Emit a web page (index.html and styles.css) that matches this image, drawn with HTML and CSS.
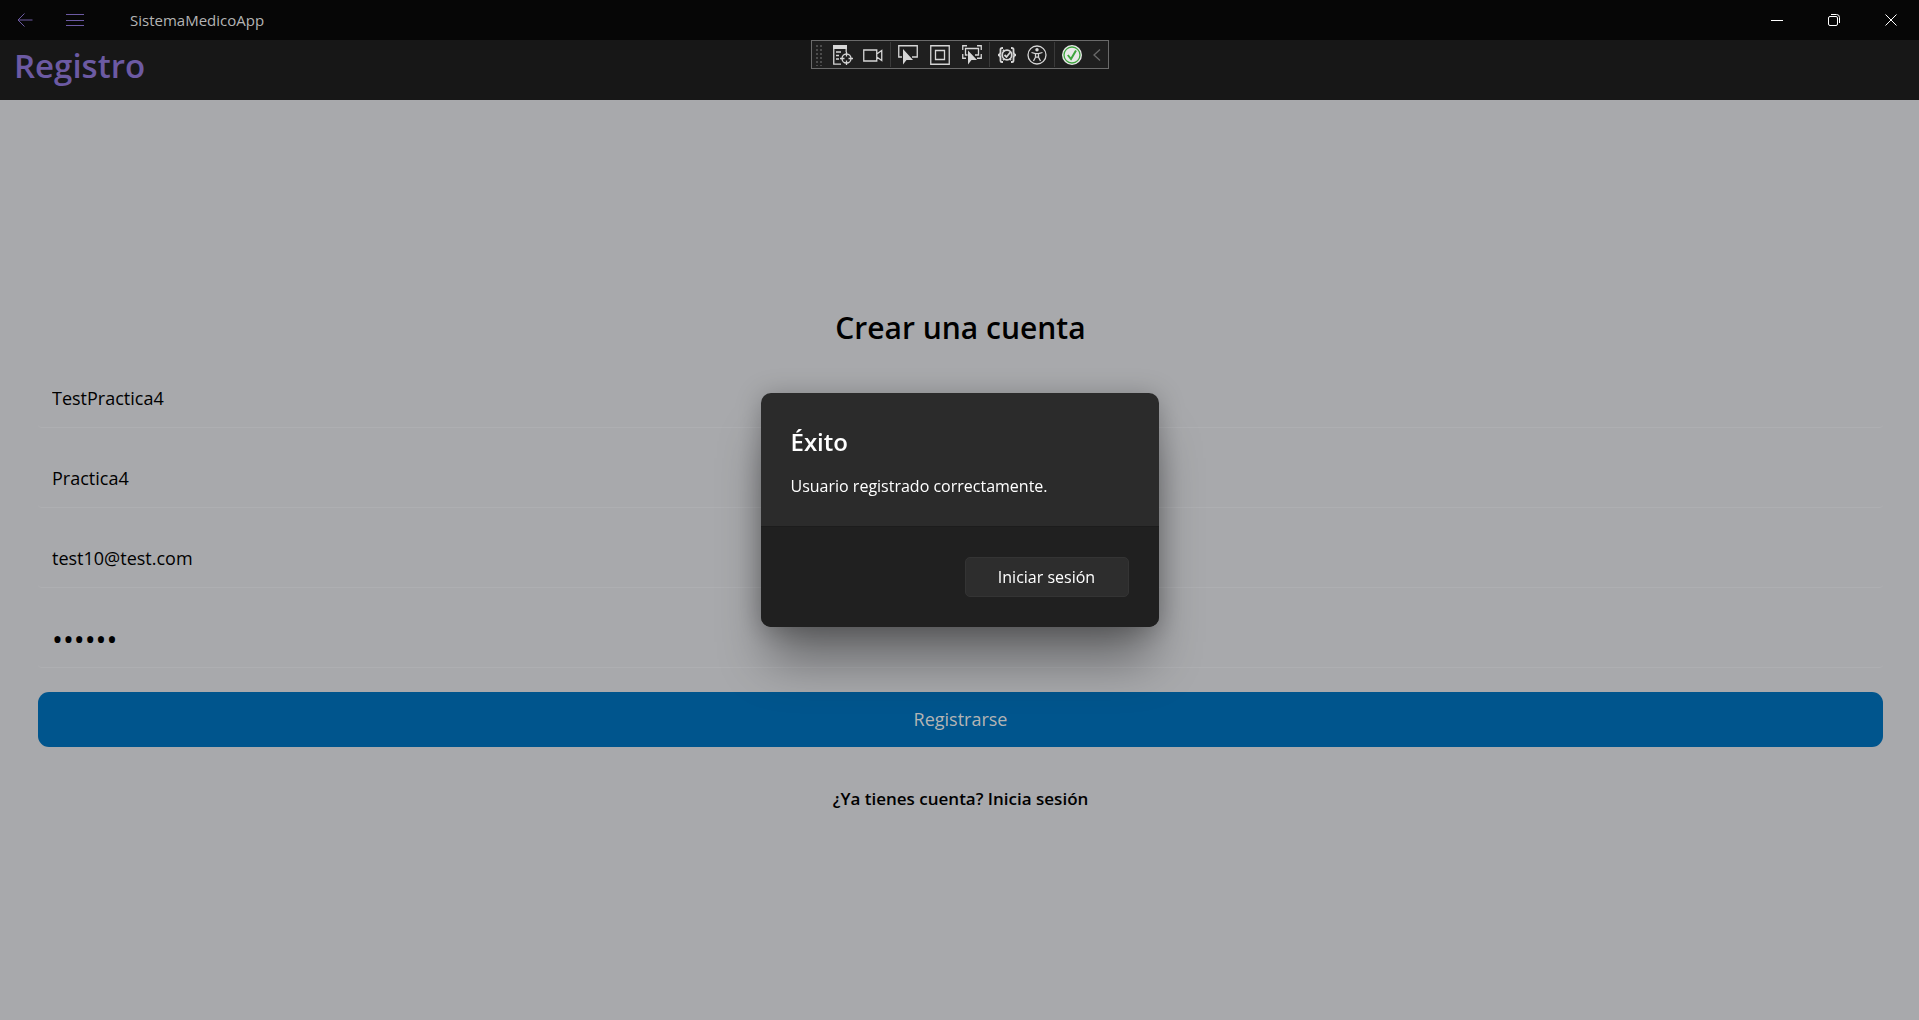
FILE: index.html
```html
<!DOCTYPE html>
<html lang="es">
<head>
<meta charset="utf-8">
<meta name="viewport" content="width=device-width, initial-scale=1">
<title>SistemaMedicoApp</title>
<link rel="stylesheet" href="styles.css">
</head>
<body>
<div class="app">
  <header class="titlebar">
    <button class="nav-button" type="button" aria-label="Atrás">
      <svg width="16" height="14" viewBox="0 0 16 14"><path d="M7.500 .5 1 7l6.500 6.500M1 7h14.500"/></svg>
    </button>
    <button class="nav-button" type="button" aria-label="Menú">
      <svg width="20" height="14" viewBox="0 0 20 14"><path d="M1 1.500h18M1 7.500h18M1 12.500h18"/></svg>
    </button>
    <span class="app-name">SistemaMedicoApp</span>
    <div class="window-controls">
      <button class="window-button" type="button" aria-label="Minimizar">
        <svg width="14" height="14" viewBox="0 0 14 14"><path d="M1 7.500h12"/></svg>
      </button>
      <button class="window-button" type="button" aria-label="Restaurar">
        <svg width="14" height="14" viewBox="0 0 14 14"><rect x="1.500" y="3.500" width="9" height="9" rx="1.500"/><path d="M4 1.500h5.500a3 3 0 0 1 3 3V10"/></svg>
      </button>
      <button class="window-button" type="button" aria-label="Cerrar">
        <svg width="14" height="14" viewBox="0 0 14 14"><path d="m1.500 1.500 11 11m0-11-11 11"/></svg>
      </button>
    </div>
  </header>

  <div class="page-header">
    <h1 class="page-title">Registro</h1>
    <div class="debug-bar" role="toolbar" aria-label="Herramientas de depuración">
      <span class="grip"></span>
      <button class="tool" type="button" aria-label="Árbol visual">
        <svg width="20" height="20" viewBox="0 0 20 20"><path class="solid" d="M0 0h14v4H0z"/><path d="M.75 3v16.200H8M3 7h5M3 10.500h3M3 14h3M13.200 4v3"/><circle cx="13.500" cy="13.500" r="4.500"/><path d="M13.500 7v4.500m0 4V20M7 13.500h4.500m4 0H20"/></svg>
      </button>
      <button class="tool" type="button" aria-label="Grabar">
        <svg width="20" height="20" viewBox="0 0 20 20"><path d="M.75 5h13v11H.75zM13.750 9l5-3.500v10l-5-3.500"/></svg>
      </button>
      <span class="divider"></span>
      <button class="tool" type="button" aria-label="Seleccionar elemento">
        <svg width="20" height="20" viewBox="0 0 20 20"><path d="M4 12H.75V.75h18.500V12H14"/><path class="solid" d="M5 4v15.500l3.500-4.500H15z"/></svg>
      </button>
      <button class="tool tool-gap" type="button" aria-label="Mostrar adornos de diseño">
        <svg width="20" height="20" viewBox="0 0 20 20"><path d="M.75.75h18.500v18.500H.75zM5.500 5.500h9v9h-9z"/></svg>
      </button>
      <button class="tool tool-gap" type="button" aria-label="Seguir elemento con foco">
        <svg width="20" height="20" viewBox="0 0 20 20"><path d="M.75 5V.75H5M15 .75h4.250V5M.75 9v4.250H4M19.250 9v4.250H15M5.500 10H3.500V3.500h13V10H13"/><path class="solid" d="M6 5.500v14l3.500-4.500h5.500z"/></svg>
      </button>
      <span class="divider"></span>
      <button class="tool" type="button" aria-label="Errores de enlace">
        <svg class="bold" width="20" height="20" viewBox="0 0 20 20"><path d="M6 3H5C3 3 3.500 5 3.500 7S2.500 10 1 10c1.500 0 2.500 1 2.500 3S3 17 5 17h1M14 3h1c2 0 1.500 2 1.500 4s1 3 2.500 3c-1.500 0-2.500 1-2.500 3s.5 4-1.500 4h-1"/><circle cx="10" cy="10" r="4.800"/><path d="m7.500 10 2 2 4-5M6 5l1.500 1.500M6 15l1.500-1.500M14 15l-1.500-1.500"/></svg>
      </button>
      <button class="tool" type="button" aria-label="Accesibilidad">
        <svg width="20" height="20" viewBox="0 0 20 20"><circle cx="10" cy="10" r="9"/><circle class="solid" cx="10" cy="4.800" r="1.700"/><path d="M4.500 7.500 8.500 8.700h3l4-1.200M8.500 8.700v3.500L6.500 16M11.500 8.700v3.500l2 3.800M8.500 12.200h3"/></svg>
      </button>
      <span class="divider"></span>
      <button class="tool" type="button" aria-label="Recarga activa">
        <svg width="20" height="20" viewBox="0 0 20 20"><circle cx="10" cy="10" r="10" fill="#e8e8e8" stroke="none"/><circle class="ok" cx="10" cy="10" r="8"/><path class="ok check" d="m5.800 10 3.200 4 5-8.500"/></svg>
      </button>
      <button class="tool collapse" type="button" aria-label="Contraer">
        <svg width="8" height="12" viewBox="0 0 8 12"><path d="M7 .5 1 6l6 5.500"/></svg>
      </button>
    </div>
  </div>

  <main class="content">
    <form class="form">
      <h2 class="form-title">Crear una cuenta</h2>
      <input class="field" type="text" aria-label="Nombre" value="TestPractica4">
      <input class="field" type="text" aria-label="Apellido" value="Practica4">
      <input class="field" type="email" aria-label="Correo electrónico" value="test10@test.com">
      <input class="field field-password" type="password" aria-label="Contraseña" value="123456">
      <button class="submit" type="button">Registrarse</button>
      <a class="login-link" href="#login">¿Ya tienes cuenta? Inicia sesión</a>
    </form>
  </main>
</div>

<div class="overlay">
  <section class="dialog" role="alertdialog" aria-modal="true" aria-labelledby="dialog-title" aria-describedby="dialog-text">
    <div class="dialog-body">
      <h2 class="dialog-title" id="dialog-title">Éxito</h2>
      <p class="dialog-text" id="dialog-text">Usuario registrado correctamente.</p>
    </div>
    <div class="dialog-actions">
      <button class="dialog-button" type="button">Iniciar sesión</button>
    </div>
  </section>
</div>
</body>
</html>
```
FILE: styles.css
```css
* {
  box-sizing: border-box;
}

body {
  margin: 0;
  font-family: "Open Sans", "Noto Sans", sans-serif;
  font-size: 18px;
  line-height: 24px;
  color: #000;
  background: #a8a9ac;
}

h1,
h2,
p {
  margin: 0;
}

button,
input {
  margin: 0;
  padding: 0;
  border: 0;
  background: none;
  color: inherit;
  font: inherit;
}

svg {
  display: block;
  fill: none;
  stroke: currentColor;
}

.app {
  display: flex;
  flex-direction: column;
  min-height: 100vh;
}

/* Title bar */

.titlebar {
  display: flex;
  align-items: center;
  height: 40px;
  background: #060606;
  color: #b4b4b4;
}

.nav-button {
  display: grid;
  place-items: center;
  width: 50px;
  height: 40px;
  color: #6c5aa3;
}

.app-name {
  margin-left: 30px;
  font-size: 15px;
}

.window-controls {
  display: flex;
  margin-left: auto;
  color: #fff;
}

.window-button {
  display: grid;
  place-items: center;
  width: 57px;
  height: 38px;
}

/* Page header */

.page-header {
  position: relative;
  height: 60px;
  padding: 0 14px;
  background: #171717;
}

.page-title {
  font-size: 33px;
  font-weight: 600;
  line-height: 52px;
  color: #6c5aa3;
}

.debug-bar {
  position: absolute;
  top: 0;
  left: 50%;
  display: flex;
  align-items: center;
  height: 29px;
  padding-left: 3px;
  border: 1px solid #6a6a6a;
  background: #1f1f1f;
  color: #d6d6d6;
  transform: translateX(-50%);
}

.debug-bar svg {
  stroke-width: 1.3;
}

.debug-bar .bold {
  stroke-width: 1.8;
}

.grip {
  width: 9px;
  height: 22px;
  margin-right: 4px;
  background: radial-gradient(circle, #4c4c4c 1px, transparent 1px) 0 0 / 4px 4px;
}

.tool {
  display: grid;
  flex: none;
  place-items: center;
  width: 30px;
  height: 27px;
}

.tool-gap {
  margin-left: 2px;
}

.divider {
  width: 1px;
  height: 25px;
  margin: 0 2px;
  background: #3a3a3a;
}

.solid {
  fill: currentColor;
  stroke: none;
}

.ok {
  stroke: #3da43d;
}

.debug-bar .check {
  stroke-width: 2;
}

.collapse {
  width: 21px;
  color: #6a6a6a;
}

/* Registration form */

.content {
  display: flex;
  flex: 1;
  flex-direction: column;
  justify-content: center;
  padding: 14px 36px 0 38px;
}

.form {
  display: flex;
  flex-direction: column;
  gap: 24px;
}

.form-title {
  font-size: 30px;
  font-weight: 600;
  line-height: 40px;
  text-align: center;
}

.field {
  width: 100%;
  height: 56px;
  padding: 0 14px 2px;
  border-bottom: 1px solid #aeafb2;
  border-radius: 4px;
}

.field-password {
  font-size: 29px;
}

.submit {
  height: 55px;
  border-radius: 11px;
  background: #00558d;
  color: #b4b4b4;
}

.login-link {
  align-self: center;
  padding: 16px 0;
  font-size: 17px;
  font-weight: 600;
  color: inherit;
  text-decoration: none;
}

/* Dialog */

.overlay {
  position: fixed;
  inset: 0;
  display: grid;
  place-items: center;
}

.dialog {
  width: 398px;
  overflow: hidden;
  border-radius: 10px;
  background: #2b2b2b;
  color: #fff;
  box-shadow: 0 40px 50px -8px rgba(0, 0, 0, .4), 0 2px 26px rgba(0, 0, 0, .25);
}

.dialog-body {
  padding: 31px 30px 28px;
}

.dialog-title {
  margin-bottom: 14px;
  font-size: 24px;
  font-weight: 600;
  line-height: 36px;
}

.dialog-text {
  font-size: 16px;
}

.dialog-actions {
  display: flex;
  justify-content: flex-end;
  padding: 30px;
  border-top: 1px solid #1c1c1c;
  background: #202020;
}

.dialog-button {
  width: 164px;
  height: 40px;
  border: 1px solid #343434;
  border-radius: 5px;
  background: #2d2d2d;
  font-size: 16px;
}
```
